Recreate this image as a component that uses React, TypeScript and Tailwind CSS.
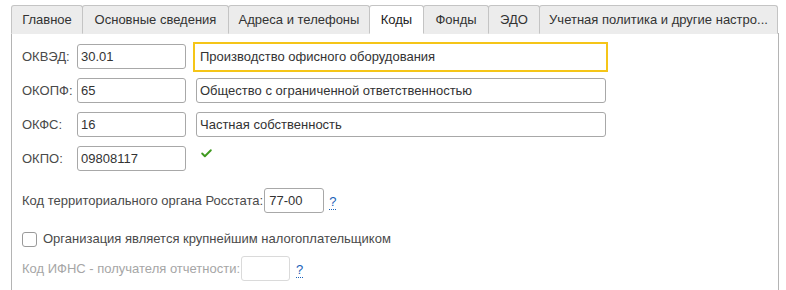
import { Check } from 'lucide-react'

const tabs = [
  { title: 'Главное', w: 'w-[72px]' },
  { title: 'Основные сведения', w: 'w-[147px]' },
  { title: 'Адреса и телефоны', w: 'w-[142px]' },
  { title: 'Коды', w: 'w-[55px]', active: true },
  { title: 'Фонды', w: 'w-[66px]' },
  { title: 'ЭДО', w: 'w-[52px]' },
  { title: 'Учетная политика и другие настро...', w: 'w-[239px]' },
]

const codes = [
  { label: 'ОКВЭД:', code: '30.01', name: 'Производство офисного оборудования', focus: true },
  { label: 'ОКОПФ:', code: '65', name: 'Общество с ограниченной ответственностью' },
  { label: 'ОКФС:', code: '16', name: 'Частная собственность' },
]

function Hint() {
  return (
    <span className="text-[13px] text-[#1a62b8] border-b border-dotted border-[#1a62b8] leading-[14px]">?</span>
  )
}

export default function App() {
  return (
    <div className="w-[786px] h-[290px] bg-white overflow-hidden pt-[6px] pl-[11px] font-['Liberation_Sans',Arial,sans-serif] text-[13px] text-[#333]">
      {/* Вкладки */}
      <div className="flex items-end h-[28px]">
        {tabs.map((tab) => (
          <div
            key={tab.title}
            className={`${tab.w} h-[29px] -ml-px first:ml-0 flex items-center justify-center border border-[#c4c4c4] rounded-t-[3px] relative ${
              tab.active ? 'bg-white border-b-white z-10 text-[#222]' : 'bg-[#ececec] border-b-transparent text-[#333]'
            }`}
          >
            <span className="whitespace-nowrap">{tab.title}</span>
          </div>
        ))}
      </div>

      {/* Панель */}
      <div className="w-[768px] h-[260px] border-l border-r border-t border-[#b4b4b4] -mt-px pl-[10px] pt-[10px]">
        <div className="flex flex-col gap-[9px]">
          {codes.map((row) => (
            <div key={row.label} className="flex items-center h-[25px]">
              <span className="w-[55px] text-[#4a4a4a]">{row.label}</span>
              <div className="w-[109px] h-[25px] border border-[#a8a8a8] rounded-[3px] flex items-center pl-[3px] text-[#333]">
                {row.code}
              </div>
              {row.focus ? (
                <div className="ml-[7px] w-[415px] h-[30px] border-2 border-[#f5c518] flex items-center pl-[5px] text-[#333]">
                  {row.name}
                </div>
              ) : (
                <div className="ml-[10px] w-[410px] h-[25px] border border-[#a8a8a8] rounded-[3px] flex items-center pl-[3px] text-[#333]">
                  {row.name}
                </div>
              )}
            </div>
          ))}

          <div className="flex items-center h-[25px]">
            <span className="w-[55px] text-[#4a4a4a]">ОКПО:</span>
            <div className="w-[109px] h-[25px] border border-[#a8a8a8] rounded-[3px] flex items-center pl-[3px] text-[#333]">
              09808117
            </div>
            <Check className="ml-[14px] -mt-[10px] w-[13px] h-[13px] text-[#3f9a1f]" strokeWidth={3.5} />
          </div>
        </div>

        <div className="flex items-center h-[25px] mt-[17px]">
          <span className="text-[#4a4a4a]">Код территориального органа Росстата:</span>
          <div className="ml-[1px] w-[60px] h-[25px] border border-[#a8a8a8] rounded-[3px] flex items-center pl-[4px] text-[#333]">
            77-00
          </div>
          <span className="ml-[5px] mt-[3px]"><Hint /></span>
        </div>

        <div className="flex items-center h-[16px] mt-[18px]">
          <div className="w-[15px] h-[15px] border border-[#9a9a9a] rounded-[3px] bg-white" />
          <span className="ml-[6px] text-[#4a4a4a]">Организация является крупнейшим налогоплательщиком</span>
        </div>

        <div className="flex items-center h-[25px] mt-[9px]">
          <span className="text-[#a6a6a6]">Код ИФНС - получателя отчетности:</span>
          <div className="ml-[1px] w-[49px] h-[25px] border border-[#dadada] rounded-[3px]" />
          <span className="ml-[6px] mt-[3px]"><Hint /></span>
        </div>
      </div>
    </div>
  )
}
